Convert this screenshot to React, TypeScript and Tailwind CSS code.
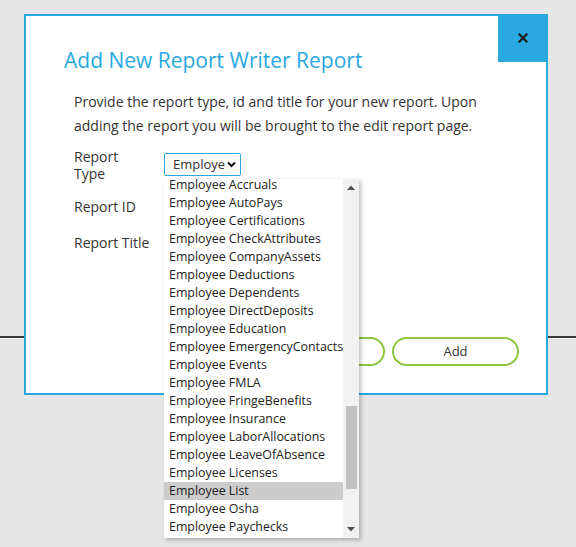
import React from 'react';

const reportTypes = [
  'Employee Accruals',
  'Employee AutoPays',
  'Employee Certifications',
  'Employee CheckAttributes',
  'Employee CompanyAssets',
  'Employee Deductions',
  'Employee Dependents',
  'Employee DirectDeposits',
  'Employee Education',
  'Employee EmergencyContacts',
  'Employee Events',
  'Employee FMLA',
  'Employee FringeBenefits',
  'Employee Insurance',
  'Employee LaborAllocations',
  'Employee LeaveOfAbsence',
  'Employee Licenses',
  'Employee List',
  'Employee Osha',
  'Employee Paychecks',
  'Employee PayRates',
];

const App = () => {
  const selected = 'Employee List';

  return (
    <div
      className="relative w-full h-[547px] overflow-hidden bg-[#e6e6e6] text-[#333]"
      style={{ fontFamily: '"Open Sans", "Liberation Sans", sans-serif' }}
    >
      {/* Page behind the modal */}
      <div className="pt-[336px]">
        <div className="h-[2px] bg-[#3c3c3c]" />
        <div className="h-px bg-[#f4f4f4]" />
      </div>

      {/* Modal */}
      <div className="absolute left-[24px] top-[14px] w-[524px] h-[381px] border-2 border-[#29a8e0] bg-white">
        <button className="absolute -top-[2px] -right-[2px] w-[50px] h-[48px] bg-[#29a8e0] flex items-center justify-center">
          <svg width="10" height="10" viewBox="0 0 10 10">
            <path d="M1.5 1.5 L8.5 8.5 M8.5 1.5 L1.5 8.5" stroke="#1a1a1a" strokeWidth="2.2" strokeLinecap="square" />
          </svg>
        </button>

        <div className="pt-[30px] pl-[38px]">
          <h1 className="text-[21px] leading-[28px] text-[#29a8e0] font-normal">Add New Report Writer Report</h1>
        </div>

        <div className="pl-[48px] pr-[40px] pt-[16px]">
          <p className="text-[14px] leading-[24px] text-[#333]">
            Provide the report type, id and title for your new report. Upon adding the report you will be brought to the edit report page.
          </p>

          <div className="mt-[10px] grid grid-cols-[90px_1fr] text-[14px] leading-[17px]">
            <label>Report<br />Type</label>
            <div className="pt-[5px]">
              <div className="w-[77px] h-[23px] border border-[#29a8e0] rounded-[2px] flex items-center pl-[8px] pr-[4px] text-[13px]">
                <span className="flex-1 overflow-hidden whitespace-nowrap">Employe</span>
                <svg width="9" height="7" viewBox="0 0 9 7" className="shrink-0">
                  <path d="M1 1.5 L4.5 5 L8 1.5" stroke="#111" strokeWidth="2" fill="none" />
                </svg>
              </div>
            </div>

            <label className="mt-[16px]">Report ID</label>
            <div className="mt-[10px]">
              <input className="w-[180px] h-[24px] border border-[#ccc]" />
            </div>

            <label className="mt-[18px]">Report Title</label>
            <div className="mt-[10px]">
              <input className="w-[180px] h-[24px] border border-[#ccc]" />
            </div>
          </div>
        </div>

        <div className="absolute left-[232px] top-[321px] flex gap-[7px]">
          <button className="w-[127px] h-[29px] rounded-full border-2 border-[#8dc63f] text-[13px] text-[#333]">Cancel</button>
          <button className="w-[127px] h-[29px] rounded-full border-2 border-[#8dc63f] text-[13px] text-[#333]">Add</button>
        </div>
      </div>

      {/* Open select list */}
      <div className="absolute left-[164px] top-[179px] w-[195px] h-[359px] bg-white shadow-[2px_2px_4px_rgba(0,0,0,0.25)] flex overflow-hidden">
        <div className="flex-1 overflow-hidden">
          <ul className="-mt-[3px]">
            {reportTypes.map((t) => (
              <li
                key={t}
                className={`h-[18px] leading-[18px] pl-[5px] text-[12.4px] text-[#222] whitespace-nowrap ${t === selected ? 'bg-[#cccccc]' : ''}`}
              >
                {t}
              </li>
            ))}
          </ul>
        </div>
        <div className="w-[16px] bg-[#f1f1f1] flex flex-col items-center">
          <div className="h-[17px] flex items-center justify-center">
            <svg width="8" height="5" viewBox="0 0 8 5">
              <path d="M0 5 L4 0.5 L8 5 Z" fill="#505050" />
            </svg>
          </div>
          <div className="flex-1 w-full flex flex-col items-center">
            <div className="h-[210px]" />
            <div className="w-[11px] h-[83px] bg-[#c1c1c1]" />
          </div>
          <div className="h-[17px] flex items-center justify-center">
            <svg width="8" height="5" viewBox="0 0 8 5">
              <path d="M0 0 L8 0 L4 4.5 Z" fill="#505050" />
            </svg>
          </div>
        </div>
      </div>
    </div>
  );
};

export default App;
